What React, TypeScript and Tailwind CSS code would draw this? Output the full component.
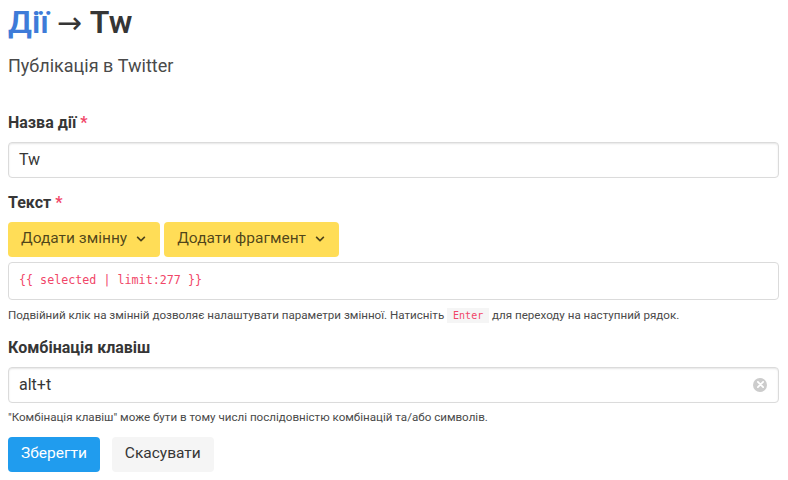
import React from "react";

const Chevron = () => (
  <svg width="10" height="10" viewBox="0 0 448 512" className="ml-[9px] fill-current">
    <path d="M207 381.5L12.7 187.1c-9.4-9.4-9.4-24.6 0-33.9l22.7-22.7c9.4-9.4 24.5-9.4 33.9 0L224 285.3l154.7-154.8c9.4-9.4 24.5-9.4 33.9 0l22.7 22.7c9.4 9.4 9.4 24.6 0 33.9L241 381.5c-9.4 9.3-24.6 9.3-34 0z" />
  </svg>
);

export default function App() {
  return (
    <div className="w-[788px] h-[480px] bg-white px-[8px] text-[#4a4a4a] font-['Roboto',sans-serif] overflow-hidden">
      <h1 className="text-[32px] font-semibold leading-[1.125] pt-[4px] text-[#363636]">
        <span className="text-[#3e7bd8]">Дії</span>{" "}
        <span className="font-['DejaVu_Sans',sans-serif] font-normal text-[30px]">→</span> Tw
      </h1>
      <p className="text-[18px] leading-[1.25] mt-[15px] text-[#4a4a4a]">Публікація в Twitter</p>

      <div className="mt-[33px]">
        <label className="block text-[16px] font-bold text-[#363636] leading-[24px]">
          Назва дії <span className="text-[#f14668]">*</span>
        </label>
        <div className="mt-[7px] h-[36px] w-[771px] border border-[#dbdbdb] rounded-[4px] shadow-[inset_0_1px_2px_rgba(10,10,10,0.1)] flex items-center px-[10px] text-[16px] text-[#363636]">
          Tw
        </div>
      </div>

      <div className="mt-[13px]">
        <label className="block text-[16px] font-bold text-[#363636] leading-[24px]">
          Текст <span className="text-[#f14668]">*</span>
        </label>
        <div className="flex gap-[4px] mt-[7px]">
          <button className="h-[35px] pl-[13px] pr-[14px] rounded-[4px] bg-[#ffdd57] text-[15.5px] text-[rgba(0,0,0,0.7)] flex items-center">
            Додати змінну
            <Chevron />
          </button>
          <button className="h-[35px] pl-[13px] pr-[14px] rounded-[4px] bg-[#ffdd57] text-[15.5px] text-[rgba(0,0,0,0.7)] flex items-center">
            Додати фрагмент
            <Chevron />
          </button>
        </div>
        <div className="mt-[5px] h-[38px] w-[771px] border border-[#dbdbdb] rounded-[4px] flex items-center px-[10px] font-['DejaVu_Sans_Mono',monospace] text-[11.7px] text-[#f14668]">
          {"{{ selected | limit:277 }}"}
        </div>
        <p className="mt-[6px] text-[11.6px] leading-[18px] text-[#4a4a4a]">
          Подвійний клік на змінній дозволяє налаштувати параметри змінної. Натисніть{" "}
          <code className="bg-[#f5f5f5] text-[#f14668] font-['DejaVu_Sans_Mono',monospace] text-[10px] px-[6px] py-[2px]">Enter</code>{" "}
          для переходу на наступний рядок.
        </p>
      </div>

      <div className="mt-[11px]">
        <label className="block text-[16px] font-bold text-[#363636] leading-[24px]">Комбінація клавіш</label>
        <div className="mt-[7px] h-[36px] w-[771px] border border-[#dbdbdb] rounded-[4px] shadow-[inset_0_1px_2px_rgba(10,10,10,0.1)] flex items-center justify-between pl-[10px] pr-[11px] text-[16px] text-[#363636]">
          <span>alt+t</span>
          <span className="w-[14px] h-[14px] rounded-full bg-[#cccccc] flex items-center justify-center">
            <svg width="7" height="7" viewBox="0 0 8 8">
              <path d="M1 1L7 7M7 1L1 7" stroke="white" strokeWidth="2" strokeLinecap="round" />
            </svg>
          </span>
        </div>
        <p className="mt-[5px] text-[11.6px] leading-[18px] text-[#4a4a4a]">
          "Комбінація клавіш" може бути в тому числі послідовністю комбінацій та/або символів.
        </p>
      </div>

      <div className="flex gap-[12px] mt-[11px]">
        <button className="h-[35px] px-[13px] rounded-[4px] bg-[#209cee] text-white text-[15.5px]">Зберегти</button>
        <button className="h-[35px] px-[13px] rounded-[4px] bg-[#f5f5f5] text-[#363636] text-[15.5px]">Скасувати</button>
      </div>
    </div>
  );
}
